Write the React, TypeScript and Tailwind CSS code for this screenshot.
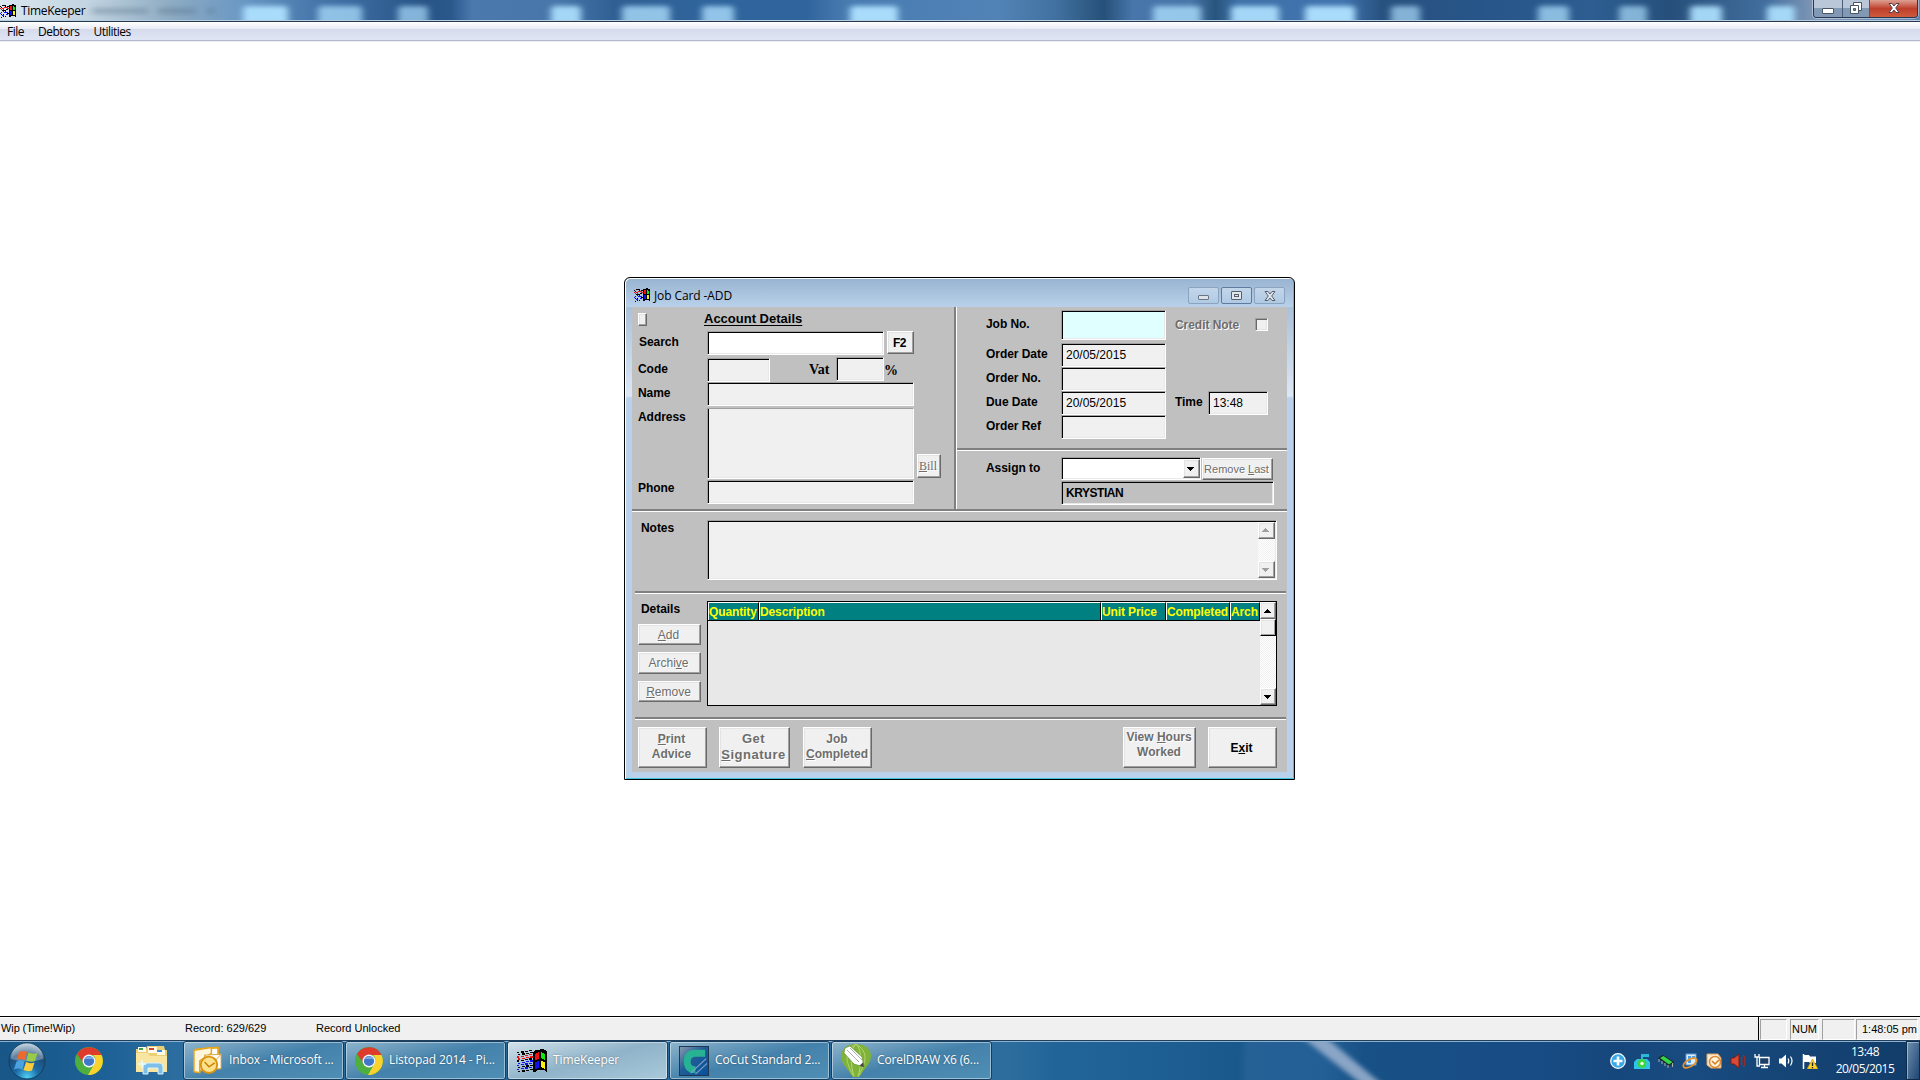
import React from "react";

const ui = "font-['Open_Sans','Noto_Sans',sans-serif]";

/* ---------- icons ---------- */

const trail = ["#000", "#000", "#f01010", "#f01010", "#000", "#1010f0", "#1010f0", "#000", "#1010f0", "#000"];

function FlagIcon({ className }: { className: string }) {
  return (
    <svg viewBox="0 0 30 24" className={className} preserveAspectRatio="none" shapeRendering="crispEdges">
      {trail.map((color, r) =>
        [0, 1, 2, 3].map((c) => (
          <rect
            key={`${r}-${c}`}
            x={(r % 2) + c * 4}
            y={3 + r * 2.1 - c * 0.7}
            width={c === 0 ? 2 : 3}
            height={1.3}
            fill={color}
          />
        ))
      )}
      <path d="M16 3 19 1h3l1-1h4v1h2l1 2v20l-3-2h-6l-3 2h-2Z" fill="#000" />
      <path d="M18 5l4-2v7l-4 1Z" fill="#f21010" />
      <path d="M24 3l4 2v6l-4-2Z" fill="#10e810" />
      <path d="M18 13l4-1v7l-4 1Z" fill="#1010f0" />
      <path d="M24 12l4 1v7l-4-2Z" fill="#f8f010" />
    </svg>
  );
}

function ChromeIcon() {
  return (
    <svg viewBox="0 0 28 28" className="size-7 shrink-0">
      <circle cx="14" cy="14" r="14" fill="#4caf3f" />
      <path d="M2 7A14 14 0 0 1 26.500 8H14a6 6 0 0 0-5.500 8Z" fill="#dd3b2c" />
      <path d="M26.500 8A14 14 0 0 1 13 28l6-10.500A6.500 6.500 0 0 0 18 8Z" fill="#fbd22d" />
      <circle cx="14" cy="14" r="6.500" fill="#f4f6f8" />
      <circle cx="14" cy="14" r="5.100" fill="#3f78c8" />
      <path d="M9.500 12a5 5 0 0 1 9 0Z" fill="#7ba9e4" />
    </svg>
  );
}

function StartOrb() {
  return (
    <svg viewBox="0 0 38 38" className="size-[38px] shrink-0">
      <defs>
        <radialGradient id="orb" cx="50%" cy="95%" r="95%">
          <stop offset="0" stopColor="#4fd0f4" />
          <stop offset="0.35" stopColor="#1b6ba6" />
          <stop offset="0.7" stopColor="#1d4d78" />
          <stop offset="1" stopColor="#b5cbdb" />
        </radialGradient>
      </defs>
      <circle cx="19" cy="19" r="18" fill="url(#orb)" stroke="#143e5e" />
      <path d="M3 17A16 16 0 0 1 35 17Q19 22 3 17Z" fill="#fff" opacity="0.3" />
      <path d="M11 10q4-2 8 0l-2 8q-4-2-8 0Z" fill="#ee6a2c" />
      <path d="M20.500 10.500q4 2 9 .5l-2.500 8q-4 1.500-8.500-.5Z" fill="#9acb45" />
      <path d="M8.500 19.500q4-2 8 0l-2 8q-4-2-8.500 0Z" fill="#4aa3e0" />
      <path d="M18 20q4 2 8.500.5l-2.500 8q-4 1.500-8.500-.5Z" fill="#fdcc3a" />
    </svg>
  );
}

function ExplorerIcon() {
  return (
    <svg viewBox="0 0 32 29" className="h-[29px] w-8 shrink-0">
      <path d="M1 3h10l1-3h17l1 4h2v22H1Z" fill="#eccf73" />
      <path d="M3 1h8v5H3ZM13 1h9v6h-9ZM22 4h8v5h-8Z" fill="#fffbe8" />
      <path d="M4 2h4v2H4Z" fill="#3ba14b" />
      <path d="M14 2h5v2h-5Z" fill="#d34331" />
      <path d="M22 4h5v2h-5Z" fill="#3b8bd8" />
      <path d="M1 7h12l2 3h17v16H1Z" fill="#f8e6a0" />
      <path d="M8 28v-7q0-4 4-4h12q4 0 4 4v7h-5v-6H13v6Z" fill="#7cc0ea" stroke="#d9f0fc" />
      <path d="M7 14v8M3 18h8" stroke="#e6fbff" strokeWidth="1.500" />
    </svg>
  );
}

function OutlookIcon() {
  return (
    <svg viewBox="0 0 31 29" className="h-[29px] w-[30px] shrink-0">
      <path d="M3 3 26 1v19L3 26Z" fill="#fff" stroke="#e5a51f" strokeWidth="2" />
      <path d="M1 4l18-3v6L7 15v12l-6-1Z" fill="#fdf6dd" stroke="#e5a51f" strokeWidth="1.500" />
      <path d="M12 9 29 8v15l-17 1Z" fill="#fff" stroke="#d9a43c" />
      <path d="m12 9 9 8 8-9" fill="none" stroke="#e0a53a" />
      <circle cx="16.500" cy="19" r="8.500" fill="#fde08a" stroke="#d9940f" strokeWidth="2" />
      <path d="m12 16 4.500 5 6-4" fill="none" stroke="#c98308" strokeWidth="1.600" />
    </svg>
  );
}

function CoCutIcon() {
  return (
    <svg viewBox="0 0 31 31" className="size-[30px] shrink-0">
      <defs>
        <linearGradient id="cocut" x1="0" y1="0" x2="1" y2="1">
          <stop offset="0" stopColor="#8b9cae" />
          <stop offset="0.45" stopColor="#215c96" />
          <stop offset="1" stopColor="#08509b" />
        </linearGradient>
      </defs>
      <rect x="0.500" y="0.500" width="30" height="30" fill="url(#cocut)" stroke="#1d3551" />
      <path d="M27 4v7H17q-5 0-5 5t5 5v7Q5 28 5 16T17 4Z" fill="#27b294" />
      <path d="M12 28 28 13M17 29 29 18" stroke="#7aa4cf" strokeWidth="1.200" />
    </svg>
  );
}

function CorelIcon() {
  return (
    <svg viewBox="0 0 30 33" className="h-[33px] w-[30px] shrink-0">
      <path d="M15 0C25 0 30 6 30 12c0 8-7 12-10 19q-1 2-4 2h-2q-3 0-4-2C7 24 0 20 0 12 0 6 5 0 15 0Z" fill="#7fb239" />
      <path
        d="M15 0c-7 7-5 22-2 33M15 0c7 7 5 22 2 33M15 0C2 8 5 18 12 31M15 0c13 8 10 18 3 31"
        stroke="#b4d673"
        fill="none"
      />
      <path d="M4 4 9 2l12 11 2 10-10-3L3 9Z" fill="#fff" stroke="#5d8a22" strokeWidth="0.600" />
      <path d="m6 6 12 12M9 4l12 12" stroke="#9a9a9a" strokeWidth="0.800" />
      <path d="m23 23-4.500-1.200 3.600-3.600Z" fill="#444" />
    </svg>
  );
}

function Tray() {
  return (
    <div className="mr-[17px] flex items-center gap-2 [&>svg]:size-4 [&>svg]:shrink-0">
      <svg viewBox="0 0 16 16">
        <circle cx="8" cy="8" r="7.300" fill="#38a8ea" stroke="#fff" strokeWidth="1.200" />
        <path d="M8 3.500v9M3.500 8h9" stroke="#fff" strokeWidth="2.600" />
      </svg>
      <svg viewBox="0 0 16 16">
        <path d="M7 1h8v3H9v3H7Z" fill="#28b8d8" />
        <path d="M0 9l3-3h10l3 3v7H0Z" fill="#30c4e8" />
        <circle cx="8" cy="10.500" r="4.500" fill="#3bd63f" />
        <circle cx="8" cy="10.500" r="1.700" fill="#f4ffe8" />
      </svg>
      <svg viewBox="0 0 16 16">
        <path d="M0 5l5-3 11 7-5 4Z" fill="#182018" />
        <path d="M2 5 5.500 3l9 6-3.500 2.500Z" fill="#34d548" />
        <path d="M1 6v3M4 8v3M7 10v3M10 12v3M14.500 10v4" stroke="#a8b0a8" />
      </svg>
      <svg viewBox="0 0 16 16">
        <rect x="4" y="1" width="10" height="11" fill="#dceefe" stroke="#5a9ad8" />
        <path d="M6 3h3v3H6ZM10 3h3v3h-3ZM6 7h3v3H6Z" fill="#4b9ce8" />
        <ellipse cx="8" cy="10" rx="7.500" ry="3.500" transform="rotate(-30 8 10)" fill="none" stroke="#e9912b" strokeWidth="1.700" />
      </svg>
      <svg viewBox="0 0 16 16">
        <path d="M1 1h11l3 4v10H5l-4-3Z" fill="#fce9cf" stroke="#e8a357" />
        <circle cx="9" cy="9" r="5.500" fill="#fff3dd" stroke="#dd8b35" strokeWidth="1.500" />
        <path d="m6 8 3 3 4-4" fill="none" stroke="#d67a1e" strokeWidth="1.500" />
      </svg>
      <svg viewBox="0 0 16 16">
        <path d="M1 5h3l5-4v14l-5-4H1Z" fill="#d84a35" stroke="#7c1d15" />
        <path d="M11 4q2 4 0 8M13.500 2q3 6 0 12" stroke="#a12c22" fill="none" strokeWidth="1.300" />
      </svg>
      <svg viewBox="0 0 16 16">
        <path d="M5.500 4.500h9.500v7H5.500Z" fill="#1b3f68" stroke="#fff" strokeWidth="1.300" />
        <path d="M7 14.500h7M10.500 12v2M1 1v3h4V1M3 4v9h3" stroke="#fff" strokeWidth="1.300" fill="none" />
      </svg>
      <svg viewBox="0 0 16 16">
        <path d="M1 5.500h2.500L8 1.500v13l-4.500-4H1Z" fill="#fff" />
        <path d="M10 5.500q1.500 2.500 0 5M12.500 3.500q3 4.500 0 9" stroke="#fff" fill="none" strokeWidth="1.200" />
      </svg>
      <svg viewBox="0 0 16 16">
        <path d="M1.500 1v15" stroke="#fff" strokeWidth="1.500" />
        <path d="M2 2h5l1 1.500h6V10H8L7 9H2Z" fill="#fff" />
        <path d="m10.500 6 5.500 10H5Z" fill="#fcd52c" stroke="#c08a08" strokeWidth="0.600" />
        <path d="M10.500 9.500v3.500M10.500 14v1.200" stroke="#222" strokeWidth="1.400" />
      </svg>
    </div>
  );
}

/* ---------- blurred glass backdrops ---------- */

const blobs: [number, number, number][] = [
  [243, 45, 1], [318, 44, 0.75], [398, 30, 0.7], [551, 30, 0.95], [622, 48, 0.8], [702, 32, 0.8],
  [850, 48, 1], [1153, 48, 0.8], [1231, 48, 0.95], [1305, 50, 1], [1391, 29, 0.7], [1538, 31, 0.75],
  [1619, 28, 0.7], [1690, 32, 0.95], [1767, 28, 0.95],
];

function TitleBackdrop() {
  return (
    <svg className="absolute inset-0 h-full w-full" viewBox="0 0 1920 21" preserveAspectRatio="none">
      <defs>
        <linearGradient id="sky" gradientUnits="userSpaceOnUse" x1="0" y1="0" x2="1920" y2="0">
          <stop offset="0" stopColor="#d9e6f0" />
          <stop offset="0.045" stopColor="#c3d5e1" />
          <stop offset="0.09" stopColor="#8dabc3" />
          <stop offset="0.125" stopColor="#6b98c4" />
          <stop offset="0.165" stopColor="#4576ab" />
          <stop offset="0.22" stopColor="#285487" />
          <stop offset="0.235" stopColor="#2a588b" />
          <stop offset="0.246" stopColor="#4b79ae" />
          <stop offset="0.29" stopColor="#4876aa" />
          <stop offset="0.32" stopColor="#2f6094" />
          <stop offset="0.37" stopColor="#2f649c" />
          <stop offset="0.42" stopColor="#30649c" />
          <stop offset="0.44" stopColor="#477bb0" />
          <stop offset="0.52" stopColor="#5283b7" />
          <stop offset="0.55" stopColor="#41719f" />
          <stop offset="0.575" stopColor="#265079" />
          <stop offset="0.59" stopColor="#4876ab" />
          <stop offset="0.62" stopColor="#4775a8" />
          <stop offset="0.633" stopColor="#28557d" />
          <stop offset="0.645" stopColor="#3f71a9" />
          <stop offset="0.7" stopColor="#4072ac" />
          <stop offset="0.72" stopColor="#27517f" />
          <stop offset="0.78" stopColor="#28568b" />
          <stop offset="0.83" stopColor="#2d5d91" />
          <stop offset="0.87" stopColor="#264f7b" />
          <stop offset="0.92" stopColor="#426f9e" />
          <stop offset="0.945" stopColor="#7f97b6" />
          <stop offset="1" stopColor="#5f83b0" />
        </linearGradient>
        <filter id="soft" x="-5%" y="-60%" width="110%" height="220%">
          <feGaussianBlur stdDeviation="3.500 2.500" />
        </filter>
      </defs>
      <rect width="1920" height="21" fill="url(#sky)" />
      <g filter="url(#soft)">
        {blobs.map(([x, w, o]) => (
          <rect key={x} x={x} y="6" width={w} height="22" rx="4" fill="#a9dcfb" opacity={o} />
        ))}
        <rect x="92" y="8" width="56" height="6" fill="#5b7488" opacity="0.4" />
        <rect x="158" y="8" width="38" height="6" fill="#4f6d88" opacity="0.4" />
        <rect x="208" y="8" width="6" height="6" fill="#4f6d88" opacity="0.5" />
      </g>
    </svg>
  );
}

function TaskbarBackdrop() {
  return (
    <svg className="absolute inset-0 h-full w-full" viewBox="0 0 1920 40" preserveAspectRatio="none">
      <defs>
        <linearGradient id="bar" gradientUnits="userSpaceOnUse" x1="0" y1="0" x2="1920" y2="30">
          <stop offset="0" stopColor="#175687" />
          <stop offset="0.06" stopColor="#1f6298" />
          <stop offset="0.09" stopColor="#2a6d9e" />
          <stop offset="0.3" stopColor="#25699c" />
          <stop offset="0.525" stopColor="#2d6d9e" />
          <stop offset="0.55" stopColor="#216598" />
          <stop offset="0.595" stopColor="#1f6094" />
          <stop offset="0.645" stopColor="#19588b" />
          <stop offset="0.65" stopColor="#256195" />
          <stop offset="0.69" stopColor="#235f95" />
          <stop offset="0.71" stopColor="#185186" />
          <stop offset="0.8" stopColor="#174c84" />
          <stop offset="0.84" stopColor="#16477c" />
          <stop offset="0.88" stopColor="#184b80" />
          <stop offset="1" stopColor="#113c69" />
        </linearGradient>
        <filter id="streak" x="-30%" y="-30%" width="160%" height="160%">
          <feGaussianBlur stdDeviation="2.500" />
        </filter>
      </defs>
      <rect width="1920" height="40" fill="url(#bar)" />
      <path d="M1298-6h24l62 52h-20Z" fill="#9db3d0" opacity="0.85" filter="url(#streak)" />
      <rect width="1920" height="1" fill="#20405f" />
      <rect y="1" width="1920" height="1" fill="#8fb0cd" />
    </svg>
  );
}

/* ---------- classic widgets ---------- */

function Sunken({
  className = "",
  edge = "shadow-[inset_1px_1px_0_#000,inset_-1px_-1px_0_#e9e9e9]",
  children,
}: {
  className?: string;
  edge?: string;
  children?: React.ReactNode;
}) {
  return (
    <div
      className={`shrink-0 border border-t-[#a0a0a0] border-l-[#a0a0a0] border-r-white border-b-white text-[12px] ${edge} ${className}`}
    >
      {children}
    </div>
  );
}

function Raised({ className = "", children }: { className?: string; children?: React.ReactNode }) {
  return (
    <button
      className={`flex shrink-0 flex-col items-center justify-center border border-t-white border-l-white border-r-[#696969] border-b-[#696969] bg-[#f0f0f0] pr-0.5 text-center shadow-[inset_-1px_-1px_0_#a0a0a0,inset_1px_1px_0_#e3e3e3] ${className}`}
    >
      {children}
    </button>
  );
}

function Label({ className = "", children }: { className?: string; children: React.ReactNode }) {
  return (
    <span className={`shrink-0 text-[12px] leading-[14px] font-bold tracking-[-0.05px] whitespace-nowrap ${className}`}>
      {children}
    </span>
  );
}

function Rule({ className = "" }: { className?: string }) {
  return <div className={`h-[3px] shrink-0 border-t-2 border-t-[#808080] bg-white ${className}`} />;
}

function Arrow({ up = false, className = "fill-black" }: { up?: boolean; className?: string }) {
  return (
    <svg viewBox="0 0 7 4" className={`h-1 w-[7px] ${className}`} shapeRendering="crispEdges">
      <path d={up ? "M3 0h1v1h1v1h1v1h1v1H0V3h1V2h1V1h1Z" : "M0 0h7v1H6v1H5v1H4v1H3V3H2V2H1V1H0Z"} />
    </svg>
  );
}

const dither = "bg-[repeating-conic-gradient(#fff_0_25%,#f0f0f0_0_50%)] bg-[size:2px_2px]";
const disabled = "text-[#6d6d6d] [text-shadow:1px_1px_0_#fff]";

function AccountSection() {
  return (
    <section className="flex w-[325px] flex-col border-r border-r-white shadow-[inset_-2px_0_0_#808080]">
      <div className="flex h-6 items-start pl-1.5">
        <Raised className="mt-1.5 h-[13px] w-[9px]" />
        <span className="mt-[4px] ml-[57px] text-[13px] leading-[15px] font-bold whitespace-nowrap underline underline-offset-2">
          Account Details
        </span>
      </div>
      <div className="flex pl-[7px]">
        <Label className="mt-[4px] w-[68px]">Search</Label>
        <Sunken className="h-6 w-[177px] bg-white" />
        <Raised className="ml-[3px] h-[23px] w-[27px] text-[12px] font-bold tracking-[-0.5px]">F2</Raised>
      </div>
      <div className="mt-[2px] flex h-[25px] items-start pl-1.5">
        <Label className="mt-[5px] w-[69px]">Code</Label>
        <Sunken className="mt-px h-6 w-[63px] bg-[#f0f0f0]" />
        <span className="mt-[4px] ml-[39px] w-[27px] font-['Liberation_Serif',serif] text-[14px] leading-[18px] font-bold">Vat</span>
        <Sunken className="h-6 w-12 bg-[#f0f0f0]" />
        <span className="mt-[5px] font-['Liberation_Serif',serif] text-[14px] leading-[18px] font-bold">%</span>
      </div>
      <div className="flex pl-1.5">
        <Label className="mt-[4px] w-[69px]">Name</Label>
        <Sunken className="h-6 w-[207px] bg-[#f0f0f0]" />
      </div>
      <div className="mt-[2px] flex pl-1.5">
        <Label className="mt-[2px] w-[69px]">Address</Label>
        <Sunken
          className="h-[71px] w-[207px] border-t-[#696969] bg-[#f0f0f0]"
          edge="shadow-[inset_1px_0_0_#000,inset_-1px_-1px_0_#e9e9e9]"
        />
        <Raised className={`mt-[46px] ml-[3px] size-6 font-['Liberation_Serif',serif] text-[12px] ${disabled}`}>
          <span>
            <u>B</u>ill
          </span>
        </Raised>
      </div>
      <div className="mt-px flex pl-1.5">
        <Label className="mt-[1px] w-[69px]">Phone</Label>
        <Sunken className="h-6 w-[207px] bg-[#f0f0f0]" />
      </div>
    </section>
  );
}

function OrderSection() {
  return (
    <section className="flex w-[330px] flex-col">
      <div className="flex h-9 items-start pt-[3px] pl-[29px]">
        <Label className="mt-[7px] w-[75px]">Job No.</Label>
        <Sunken className="h-[30px] w-[105px] bg-[#e0ffff]" />
        <Label className={`mt-[8px] ml-[9px] w-[80px] ${disabled}`}>Credit Note</Label>
        <Sunken
          className="mt-[8px] size-[13px] bg-[#f0f0f0]"
          edge="shadow-[inset_1px_1px_0_#696969,inset_-1px_-1px_0_#e3e3e3]"
        />
      </div>
      <div className="flex pl-[29px]">
        <Label className="mt-[4px] w-[75px]">Order Date</Label>
        <Sunken className="h-6 w-[105px] bg-[#f0f0f0] pl-1 leading-[23px]">20/05/2015</Sunken>
      </div>
      <div className="flex pl-[29px]">
        <Label className="mt-[4px] w-[75px]">Order No.</Label>
        <Sunken className="h-6 w-[105px] bg-[#f0f0f0]" />
      </div>
      <div className="flex pl-[29px]">
        <Label className="mt-[4px] w-[75px]">Due Date</Label>
        <Sunken className="h-6 w-[105px] bg-[#f0f0f0] pl-1 leading-[23px]">20/05/2015</Sunken>
        <Label className="mt-[4px] ml-[9px] w-[33px]">Time</Label>
        <Sunken className="h-6 w-[60px] bg-[#f0f0f0] pl-1 leading-[23px]">13:48</Sunken>
      </div>
      <div className="flex pl-[29px]">
        <Label className="mt-[4px] w-[75px]">Order Ref</Label>
        <Sunken className="h-6 w-[105px] bg-[#f0f0f0]" />
      </div>
      <Rule className="mt-[9px]" />
      <div className="mt-[6px] flex h-6 items-start pl-[29px]">
        <Label className="mt-[4px] w-[75px]">Assign to</Label>
        <Sunken className="flex h-[23px] w-[140px] justify-end bg-white pt-px">
          <Raised className="h-[19px] w-[17px]">
            <Arrow />
          </Raised>
        </Sunken>
        <Raised className={`mt-px ml-px h-[22px] w-[71px] text-[11px] whitespace-nowrap ${disabled}`}>
          <span>
            Remove <u>L</u>ast
          </span>
        </Raised>
      </div>
      <Sunken className="ml-[104px] h-6 w-[213px] bg-[#c0c0c0] pl-1 leading-[22px] font-bold tracking-[-0.45px]">KRYSTIAN</Sunken>
    </section>
  );
}

function DetailsSection() {
  const cols: [string, string][] = [
    ["Quantity", "w-[51px]"],
    ["Description", "w-[342px]"],
    ["Unit Price", "w-[65px]"],
    ["Completed", "w-[64px]"],
    ["Arch", "w-[30px]"],
  ];
  return (
    <section className="flex h-[123px] items-start">
      <div className="flex w-[75px] flex-col pl-1.5 text-[12px]">
        <Label className="mt-[8px] ml-[3px]">Details</Label>
        <Raised className={`mt-[8px] h-[21px] w-[63px] ${disabled}`}>
          <span>
            <u>A</u>dd
          </span>
        </Raised>
        <Raised className={`mt-[7px] h-[22px] w-[63px] ${disabled}`}>
          <span>
            Archi<u>v</u>e
          </span>
        </Raised>
        <Raised className={`mt-[7px] h-[21px] w-[63px] ${disabled}`}>
          <span>
            <u>R</u>emove
          </span>
        </Raised>
      </div>
      <div className="mt-[7px] flex h-[105px] w-[570px] border border-black bg-[#e8e8e8]">
        <div className="flex h-[19px] w-[552px] shrink-0 border-b border-black">
          {cols.map(([name, width]) => (
            <div
              key={name}
              className={`overflow-hidden border-t border-r border-l border-t-white border-r-black border-l-white bg-[#008080] text-[12px] leading-[18px] font-bold tracking-[-0.12px] whitespace-nowrap text-[#ffff00] ${width}`}
            >
              {name}
            </div>
          ))}
        </div>
        <div className={`flex w-4 flex-col ${dither}`}>
          <Raised className="h-[17px] w-4">
            <Arrow up />
          </Raised>
          <Raised className="h-[17px] w-4 border-r-black border-b-black" />
          <Raised className="mt-auto h-[17px] w-4">
            <Arrow />
          </Raised>
        </div>
      </div>
    </section>
  );
}

function JobCardWindow() {
  const winBtn = "flex h-[17px] w-[31px] items-center justify-center rounded-[2px] border bg-linear-to-b from-[#c3d6ea] to-[#b0cae4]";
  return (
    <div className="absolute top-[277px] left-[624px] flex h-[503px] w-[671px] flex-col rounded-t-[6px] border border-black bg-[linear-gradient(#99b4d1_0,#dce8f5_118px,#b9d1ea_120px)] shadow-[inset_1px_1px_0_#fff,inset_-1px_-1px_0_#3cc6dc]">
      <div className="m-px mb-0 flex h-[28px] shrink-0 items-start rounded-t-[5px] bg-linear-to-b from-[#99b4d1] to-[#b9d1ea] pt-[7px] pl-2">
        <FlagIcon className="mt-[2px] h-[14px] w-4" />
        <span className={`ml-1 text-[12px] leading-[19px] tracking-[-0.1px] ${ui}`}>Job Card -ADD</span>
        <div className="mt-[1px] mr-[8px] ml-auto flex gap-[2px]">
          <div className={`border-[#8ba3bf] ${winBtn}`}>
            <div className="mt-1 h-[5px] w-[11px] rounded-[1px] border border-[#6b7684] bg-[#dde3e8]" />
          </div>
          <div className={`border-[#5f7ba0] ${winBtn}`}>
            <div className="flex h-[9px] w-[11px] items-center justify-center rounded-[1px] border border-[#55606e] bg-[#e2e6ea]">
              <div className="h-[3px] w-[5px] border border-[#55606e]" />
            </div>
          </div>
          <div className={`border-[#8ba3bf] ${winBtn}`}>
            <svg viewBox="0 0 12 10" className="h-2.5 w-3">
              <path d="M1 .5h3L6 3 8 .5h3L7.700 5 11 9.500H8L6 7 4 9.500H1L4.300 5Z" fill="#e2e6ea" stroke="#55606e" />
            </svg>
          </div>
        </div>
      </div>
      <div className="mx-[7px] flex h-[465px] shrink-0 flex-col bg-[#c0c0c0]">
        <div className="flex h-[202px] shrink-0">
          <AccountSection />
          <OrderSection />
        </div>
        <Rule />
        <section className="flex h-[79px] shrink-0 items-start">
          <Label className="mt-[9px] ml-[9px] w-[66px]">Notes</Label>
          <Sunken className="mt-[8px] flex h-[60px] w-[570px] justify-end bg-[#f0f0f0] pt-px pr-px pb-px">
            <div className={`flex w-[17px] flex-col justify-between ${dither}`}>
              <Raised className="h-[17px] w-[17px] pb-px">
                <Arrow up className="fill-[#a0a0a0]" />
              </Raised>
              <Raised className="h-[17px] w-[17px]">
                <Arrow className="fill-[#a0a0a0]" />
              </Raised>
            </div>
          </Sunken>
        </section>
        <Rule className="mr-px ml-[3px]" />
        <DetailsSection />
        <Rule className="mr-px ml-[3px]" />
        <section className="mt-[7px] flex pr-2.5 pl-1.5 text-[12px] leading-[15px] font-bold">
          <Raised className={`h-[41px] w-[69px] pb-0.5 ${disabled}`}>
            <span>
              <u>P</u>rint
            </span>
            <span>Advice</span>
          </Raised>
          <Raised className={`ml-3 h-[41px] w-[71px] pr-0 pb-0.5 text-[13px] leading-4 tracking-[0.5px] ${disabled}`}>
            <span>Get</span>
            <span>
              <u>S</u>ignature
            </span>
          </Raised>
          <Raised className={`ml-[13px] h-[41px] w-[69px] pr-px pb-0.5 ${disabled}`}>
            <span>Job</span>
            <span>
              <u>C</u>ompleted
            </span>
          </Raised>
          <Raised className={`ml-auto h-[41px] w-[73px] pr-px pb-1.5 whitespace-nowrap ${disabled}`}>
            <span>
              View <u>H</u>ours
            </span>
            <span>Worked</span>
          </Raised>
          <Raised className="ml-3 h-[41px] w-[69px] pt-0.5">
            <span>
              E<u>x</u>it
            </span>
          </Raised>
        </section>
      </div>
    </div>
  );
}

function TaskButton({ icon, label, active = false }: { icon: React.ReactNode; label: string; active?: boolean }) {
  return (
    <div
      className={`flex h-[39px] w-[161px] shrink-0 items-center overflow-hidden rounded-[3px] border border-[#173e5f] pl-[9px] text-white shadow-[inset_0_0_0_1px_rgba(255,255,255,0.45)] ${
        active
          ? "bg-linear-165 from-[#d3e2ea] via-[#8fb3c9] to-[#a9c9da]"
          : "bg-linear-165 from-[#8db4cc] via-[#4482ab] to-[#4f8eb5]"
      }`}
    >
      {icon}
      <span className="ml-1.5 pb-px text-[12px] tracking-[-0.12px] whitespace-nowrap [text-shadow:0_0_2px_rgba(0,0,0,0.4)]">
        {label}
      </span>
    </div>
  );
}

export default function App() {
  return (
    <div className="relative flex h-[1080px] w-[1920px] flex-col overflow-hidden bg-white font-['Liberation_Sans',Arial,sans-serif] text-black">
      <header className={`relative flex h-[22px] shrink-0 items-start border-b border-[#28384f] ${ui}`}>
        <TitleBackdrop />
        <div className="absolute inset-x-0 bottom-0 h-px bg-[#b7cde0]" />
        <FlagIcon className="relative mt-1 h-[14px] w-4" />
        <span className="relative ml-[5px] text-[12px] leading-[22px] tracking-[-0.3px]">TimeKeeper</span>
        <div className="relative mr-[2px] ml-auto flex h-[18px] w-[105px] overflow-hidden rounded-b-[4px] border border-t-0 border-[#26384e] shadow-[0_0_0_1px_rgba(255,255,255,0.4)]">
          <div className="flex w-[29px] items-center justify-center border-r border-[#4b5d74] bg-linear-to-b from-[#b9c7d8] from-50% to-[#8299b5] to-50%">
            <div className="mt-1 h-[6px] w-3 rounded-[1px] border border-[#4a5563] bg-white" />
          </div>
          <div className="flex w-[27px] items-center justify-center border-r border-[#4b5d74] bg-linear-to-b from-[#b9c7d8] from-50% to-[#8299b5] to-50% pr-px pb-px">
            <svg viewBox="0 0 12 12" className="size-3">
              <path d="M3.500.5h8v8h-8Z" fill="#fff" stroke="#4a5563" />
              <path d="M.5 3.500h8v8h-8Z" fill="#fff" stroke="#4a5563" />
              <path d="M3.500 6.500h2v2h-2Z" fill="#7c93b0" stroke="#4a5563" />
            </svg>
          </div>
          <div className="flex flex-1 items-center justify-center bg-linear-to-b from-[#dda093] from-0% via-[#bd3f2c] via-50% to-[#cf5a3c] pb-px">
            <svg viewBox="0 0 12 10" className="h-2.5 w-3">
              <path d="M1 .5h3L6 3 8 .5h3L7.700 5 11 9.500H8L6 7 4 9.500H1L4.300 5Z" fill="#fff" stroke="#54404a" />
            </svg>
          </div>
        </div>
      </header>
      <nav
        className={`flex h-[19px] shrink-0 gap-[14px] border-b border-[#b0b8cc] bg-[linear-gradient(#ffffff_0,#e8ebf4_7px,#d5daec_7px,#e0e5f6_18px)] pl-[7px] text-[12px] leading-[20px] tracking-[-0.5px] ${ui}`}
      >
        <span>File</span>
        <span>Debtors</span>
        <span>Utilities</span>
      </nav>

      <main className="flex-1 border-t border-[#f0f0f0]">
        <JobCardWindow />
      </main>

      <footer className="flex h-6 shrink-0 border-t border-black bg-[#f0f0f0] text-[11px] leading-[23px] whitespace-nowrap shadow-[inset_0_1px_0_#fff]">
        <span className="w-[184px] pl-px tracking-[-0.1px]">Wip (Time!Wip)</span>
        <span className="w-[132px] pl-px">Record: 629/629</span>
        <span>Record Unlocked</span>
        <div className="ml-auto flex h-[23px] gap-[3px] border-l border-black pt-[2px] pr-0.5 pl-px leading-[19px] *:border *:border-t-[#a0a0a0] *:border-r-white *:border-b-white *:border-l-[#a0a0a0]">
          <div className="w-[27px]" />
          <div className="w-[29px] text-center">NUM</div>
          <div className="w-[33px]" />
          <div className="-ml-0.5 w-[62px] text-right">1:48:05 pm</div>
        </div>
      </footer>

      <div className={`relative h-10 shrink-0 ${ui}`}>
        <TaskbarBackdrop />
        <div className="relative flex h-full items-center pt-px">
          <div className="flex w-[183px] items-center pl-2">
            <StartOrb />
            <div className="ml-[29px]">
              <ChromeIcon />
            </div>
            <div className="ml-8">
              <ExplorerIcon />
            </div>
          </div>
          <div className="flex gap-px">
            <TaskButton icon={<OutlookIcon />} label="Inbox - Microsoft ..." />
            <TaskButton icon={<ChromeIcon />} label="Listopad 2014 - Pi..." />
            <TaskButton icon={<FlagIcon className="h-6 w-[30px] shrink-0" />} label="TimeKeeper" active />
            <TaskButton icon={<CoCutIcon />} label="CoCut Standard 2..." />
            <TaskButton icon={<CorelIcon />} label="CorelDRAW X6 (6..." />
          </div>
          <div className="ml-auto flex h-full items-center">
            <Tray />
            <div className="w-[60px] pb-px text-center text-[12px] leading-[17px] tracking-[-0.5px] text-white">
              <div>13:48</div>
              <div>20/05/2015</div>
            </div>
            <div className="ml-[11px] h-full w-3.5 border border-[#0d2b4a] bg-linear-to-br from-[#6f8fae] to-[#1d4674] shadow-[inset_1px_1px_0_rgba(255,255,255,0.4)]" />
          </div>
        </div>
      </div>
    </div>
  );
}
